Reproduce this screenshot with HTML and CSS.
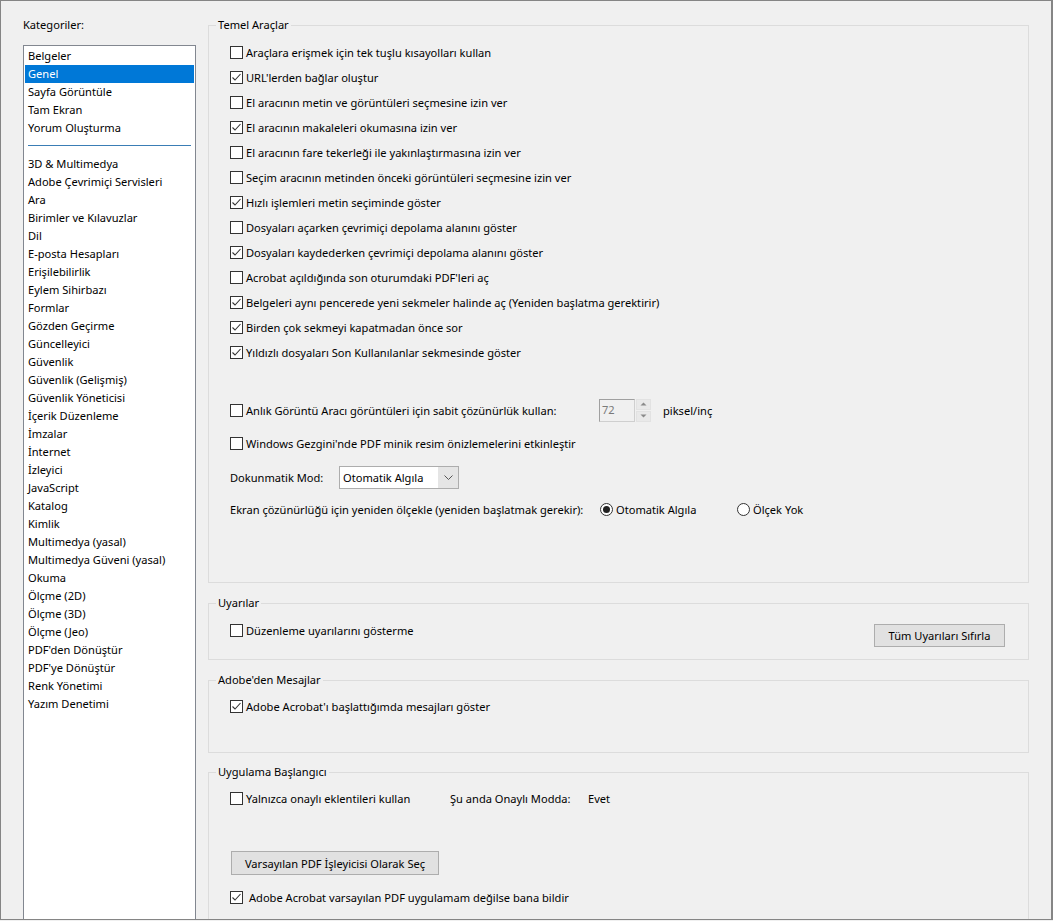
FILE: index.html
```html
<!DOCTYPE html>
<html lang="tr">
<head>
<meta charset="utf-8">
<title>Tercihler</title>
<link rel="stylesheet" href="styles.css">
</head>
<body>
<div class="window">
  <div class="sidebar">
    <div class="cat-label">Kategoriler:</div>
    <div class="cat-list">
      <div class="item">Belgeler</div>
      <div class="item selected">Genel</div>
      <div class="item">Sayfa Görüntüle</div>
      <div class="item">Tam Ekran</div>
      <div class="item">Yorum Oluşturma</div>
      <div class="sep"></div>
      <div class="item">3D &amp; Multimedya</div>
      <div class="item">Adobe Çevrimiçi Servisleri</div>
      <div class="item">Ara</div>
      <div class="item">Birimler ve Kılavuzlar</div>
      <div class="item">Dil</div>
      <div class="item">E-posta Hesapları</div>
      <div class="item">Erişilebilirlik</div>
      <div class="item">Eylem Sihirbazı</div>
      <div class="item">Formlar</div>
      <div class="item">Gözden Geçirme</div>
      <div class="item">Güncelleyici</div>
      <div class="item">Güvenlik</div>
      <div class="item">Güvenlik (Gelişmiş)</div>
      <div class="item">Güvenlik Yöneticisi</div>
      <div class="item">İçerik Düzenleme</div>
      <div class="item">İmzalar</div>
      <div class="item">İnternet</div>
      <div class="item">İzleyici</div>
      <div class="item">JavaScript</div>
      <div class="item">Katalog</div>
      <div class="item">Kimlik</div>
      <div class="item">Multimedya (yasal)</div>
      <div class="item">Multimedya Güveni (yasal)</div>
      <div class="item">Okuma</div>
      <div class="item">Ölçme (2D)</div>
      <div class="item">Ölçme (3D)</div>
      <div class="item">Ölçme (Jeo)</div>
      <div class="item">PDF'den Dönüştür</div>
      <div class="item">PDF'ye Dönüştür</div>
      <div class="item">Renk Yönetimi</div>
      <div class="item">Yazım Denetimi</div>
    </div>
  </div>

  <div class="main">
    <fieldset class="group">
      <legend>Temel Araçlar</legend>
      <div class="body body-temel">
        <div class="row"><span class="box"></span><span class="txt">Araçlara erişmek için tek tuşlu kısayolları kullan</span></div>
        <div class="row"><span class="box"><svg viewBox="0 0 11 11" class="tick"><path d="M1.5 5.5 L4 8 L9.5 2"/></svg></span><span class="txt">URL'lerden bağlar oluştur</span></div>
        <div class="row"><span class="box"></span><span class="txt">El aracının metin ve görüntüleri seçmesine izin ver</span></div>
        <div class="row"><span class="box"><svg viewBox="0 0 11 11" class="tick"><path d="M1.5 5.5 L4 8 L9.5 2"/></svg></span><span class="txt">El aracının makaleleri okumasına izin ver</span></div>
        <div class="row"><span class="box"></span><span class="txt">El aracının fare tekerleği ile yakınlaştırmasına izin ver</span></div>
        <div class="row"><span class="box"></span><span class="txt">Seçim aracının metinden önceki görüntüleri seçmesine izin ver</span></div>
        <div class="row"><span class="box"><svg viewBox="0 0 11 11" class="tick"><path d="M1.5 5.5 L4 8 L9.5 2"/></svg></span><span class="txt">Hızlı işlemleri metin seçiminde göster</span></div>
        <div class="row"><span class="box"></span><span class="txt">Dosyaları açarken çevrimiçi depolama alanını göster</span></div>
        <div class="row"><span class="box"><svg viewBox="0 0 11 11" class="tick"><path d="M1.5 5.5 L4 8 L9.5 2"/></svg></span><span class="txt">Dosyaları kaydederken çevrimiçi depolama alanını göster</span></div>
        <div class="row"><span class="box"></span><span class="txt">Acrobat açıldığında son oturumdaki PDF'leri aç</span></div>
        <div class="row"><span class="box"><svg viewBox="0 0 11 11" class="tick"><path d="M1.5 5.5 L4 8 L9.5 2"/></svg></span><span class="txt">Belgeleri aynı pencerede yeni sekmeler halinde aç (Yeniden başlatma gerektirir)</span></div>
        <div class="row"><span class="box"><svg viewBox="0 0 11 11" class="tick"><path d="M1.5 5.5 L4 8 L9.5 2"/></svg></span><span class="txt">Birden çok sekmeyi kapatmadan önce sor</span></div>
        <div class="row"><span class="box"><svg viewBox="0 0 11 11" class="tick"><path d="M1.5 5.5 L4 8 L9.5 2"/></svg></span><span class="txt">Yıldızlı dosyaları Son Kullanılanlar sekmesinde göster</span></div>

        <div class="row row-snap">
          <span class="snap-label"><span class="box"></span><span class="txt">Anlık Görüntü Aracı görüntüleri için sabit çözünürlük kullan:</span></span>
          <span class="num">72</span>
          <span class="spin"><span class="spin-btn"><svg viewBox="0 0 7 4" class="arr"><path d="M0.5 3.5 L3.5 0.5 L6.5 3.5 Z"/></svg></span><span class="spin-btn"><svg viewBox="0 0 7 4" class="arr"><path d="M0.5 0.5 L3.5 3.5 L6.5 0.5 Z"/></svg></span></span>
          <span class="unit">piksel/inç</span>
        </div>
        <div class="row row-win"><span class="box"></span><span class="txt">Windows Gezgini'nde PDF minik resim önizlemelerini etkinleştir</span></div>
        <div class="row row-touch">
          <span class="touch-label">Dokunmatik Mod:</span>
          <span class="select"><span class="select-val">Otomatik Algıla</span><span class="select-arrow"><svg viewBox="0 0 9 5" class="chev"><path d="M0.5 0.5 L4.5 4.5 L8.5 0.5"/></svg></span></span>
        </div>
        <div class="row row-scale">
          <span class="scale-label">Ekran çözünürlüğü için yeniden ölçekle (yeniden başlatmak gerekir):</span>
          <span class="radio-opt opt-auto"><span class="radio on"></span><span class="txt">Otomatik Algıla</span></span>
          <span class="radio-opt"><span class="radio"></span><span class="txt">Ölçek Yok</span></span>
        </div>
      </div>
    </fieldset>

    <fieldset class="group g-warn">
      <legend>Uyarılar</legend>
      <div class="body body-warn">
        <div class="row"><span class="box"></span><span class="txt">Düzenleme uyarılarını gösterme</span></div>
        <button class="btn btn-reset">Tüm Uyarıları Sıfırla</button>
      </div>
    </fieldset>

    <fieldset class="group g-msg">
      <legend>Adobe'den Mesajlar</legend>
      <div class="body body-msg">
        <div class="row"><span class="box"><svg viewBox="0 0 11 11" class="tick"><path d="M1.5 5.5 L4 8 L9.5 2"/></svg></span><span class="txt">Adobe Acrobat'ı başlattığımda mesajları göster</span></div>
      </div>
    </fieldset>

    <fieldset class="group g-app">
      <legend>Uygulama Başlangıcı</legend>
      <div class="body body-app">
        <div class="row">
          <span class="plug-label"><span class="box"></span><span class="txt">Yalnızca onaylı eklentileri kullan</span></span>
          <span class="mode-label">Şu anda Onaylı Modda:</span>
          <span>Evet</span>
        </div>
        <button class="btn btn-default">Varsayılan PDF İşleyicisi Olarak Seç</button>
        <div class="row row-notify"><span class="box"><svg viewBox="0 0 11 11" class="tick"><path d="M1.5 5.5 L4 8 L9.5 2"/></svg></span><span class="txt wide">Adobe Acrobat varsayılan PDF uygulamam değilse bana bildir</span></div>
      </div>
    </fieldset>
  </div>
</div>
</body>
</html>
```
FILE: styles.css
```css
* { box-sizing: border-box; }

html, body {
  margin: 0;
  padding: 0;
  background: #f0f0f0;
}

body {
  font-family: "Noto Sans", "Open Sans", sans-serif;
  font-size: 11.1px;
  color: #000;
}

.window {
  width: 1053px;
  height: 920px;
  border: 1px solid #858585;
  border-right-width: 2px;
  background: #f0f0f0;
  display: flex;
  overflow: hidden;
}

/* ---------- sidebar ---------- */
.sidebar {
  width: 174px;
  margin-left: 22px;
  padding-top: 16px;
  display: flex;
  flex-direction: column;
}

.cat-label {
  line-height: 16px;
  height: 16px;
  margin-bottom: 12px;
}

.cat-list {
  flex: 1;
  width: 173px;
  background: #fff;
  border: 1px solid #828790;
  padding: 1px;
  margin-bottom: -1px;
}

.item {
  height: 18px;
  line-height: 18px;
  padding-left: 3px;
  white-space: nowrap;
}

.item.selected {
  background: #0078d7;
  color: #fff;
}

.sep {
  height: 18px;
  padding: 8px 3px 0 3px;
}
.sep::before {
  content: "";
  display: block;
  height: 1px;
  background: #3a7db5;
}

/* ---------- main ---------- */
.main {
  margin-left: 11px;
  padding-top: 16px;
  width: 821px;
}

.group {
  margin: 0;
  padding: 0;
  border: 1px solid #dcdcdc;
  min-width: 0;
  width: 821px;
}

.group legend {
  margin-left: 7px;
  padding: 0 2px;
  line-height: 16px;
  height: 16px;
}

.g-warn { margin-top: 12px; }
.g-msg { margin-top: 12px; }
.g-app { margin-top: 11px; }

.body {
  padding-left: 21px;
}

.body-temel {
  padding-top: 7px;
  padding-bottom: 61px;
}

.row {
  display: flex;
  align-items: center;
  height: 25px;
  white-space: nowrap;
}

.box {
  width: 13px;
  height: 13px;
  border: 1px solid #333;
  background: #fff;
  flex: none;
  display: flex;
  align-items: center;
  justify-content: center;
}

.tick {
  width: 11px;
  height: 11px;
  display: block;
}
.tick path {
  fill: none;
  stroke: #333;
  stroke-width: 1.1;
}

.txt { margin-left: 3px; }
.txt.wide { margin-left: 6px; }

/* snapshot row */
.row-snap { margin-top: 33px; height: 24px; }
.snap-label {
  width: 369px;
  display: flex;
  align-items: center;
}
.num {
  width: 36px;
  height: 23px;
  border: 1px solid #cfcfcf;
  border-top-color: #a0a0a0;
  border-left-color: #a0a0a0;
  background: #f0f0f0;
  color: #7a7a7a;
  line-height: 20px;
  padding-left: 2px;
}
.spin {
  margin-left: 1px;
  width: 15px;
  height: 23px;
  display: flex;
  flex-direction: column;
  gap: 1px;
}
.spin-btn {
  flex: 1;
  background: #e9e9e9;
  border: 1px solid #e2e2e2;
  display: flex;
  align-items: center;
  justify-content: center;
}
.arr { width: 7px; height: 4px; display: block; }
.arr path { fill: #8a8a8a; }
.unit { margin-left: 12px; }

.row-win { margin-top: 9px; height: 24px; }

.row-touch { margin-top: 10px; height: 24px; }
.touch-label { width: 109px; }
.select {
  width: 120px;
  height: 23px;
  border: 1px solid #adadad;
  display: flex;
  background: #e5e5e5;
}
.select-val {
  flex: 1;
  background: #fff;
  padding-left: 3px;
  line-height: 21px;
}
.select-arrow {
  width: 20px;
  display: flex;
  align-items: center;
  justify-content: center;
}
.chev { width: 9px; height: 5px; display: block; }
.chev path { fill: none; stroke: #555; stroke-width: 1; }

.row-scale { margin-top: 8px; height: 24px; }
.scale-label { width: 370px; }
.radio-opt { display: flex; align-items: center; }
.opt-auto { width: 137px; }
.radio {
  width: 13px;
  height: 13px;
  border: 1px solid #333;
  border-radius: 50%;
  background: #fff;
  display: flex;
  align-items: center;
  justify-content: center;
}
.radio.on::after {
  content: "";
  width: 7px;
  height: 7px;
  border-radius: 50%;
  background: #222;
}

/* buttons */
.btn {
  font-family: inherit;
  font-size: 11.1px;
  color: #000;
  background: #e1e1e1;
  border: 1px solid #adadad;
  height: 24px;
  padding: 0;
  margin: 0;
}

/* warnings */
.body-warn {
  padding-top: 7px;
  padding-bottom: 12px;
  padding-right: 23px;
  display: flex;
  justify-content: space-between;
  align-items: flex-start;
}
.body-warn .row { height: 24px; }
.btn-reset {
  width: 131px;
  margin-top: 6px;
  height: 23px;
}

/* messages */
.body-msg {
  padding-top: 6px;
  padding-bottom: 34px;
}
.body-msg .row { height: 24px; }

/* app start */
.body-app {
  padding-top: 6px;
  padding-bottom: 40px;
}
.body-app .row { height: 24px; }
.plug-label {
  width: 220px;
  display: flex;
  align-items: center;
}
.mode-label { width: 138px; }
.btn-default {
  display: block;
  width: 208px;
  margin: 41px 0 0 1px;
}
.row-notify { margin-top: 10px; }
```
